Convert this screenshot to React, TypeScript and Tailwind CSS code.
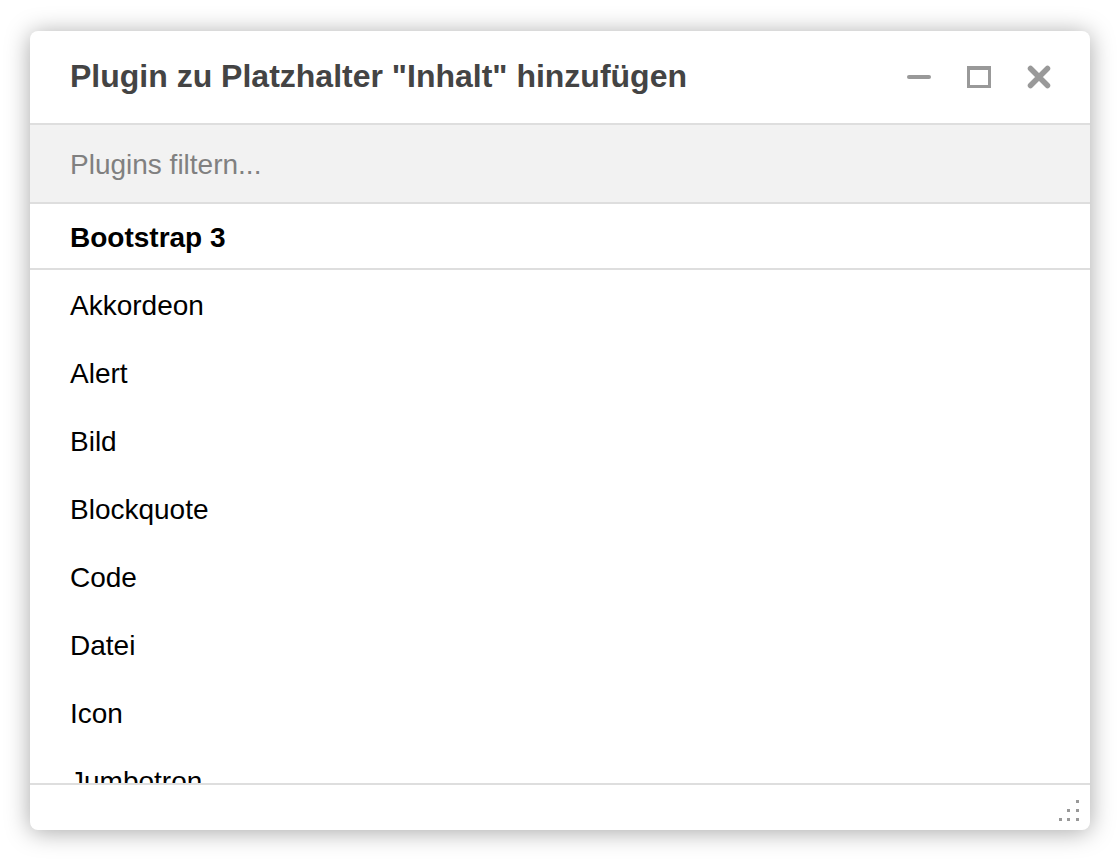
import React from 'react';

const plugins = ['Akkordeon', 'Alert', 'Bild', 'Blockquote', 'Code', 'Datei', 'Icon', 'Jumbotron'];

const MinimizeIcon = () => (
  <svg width="24" height="24" viewBox="0 0 24 24">
    <rect x="0" y="10" width="24" height="4" rx="2" fill="#999" />
  </svg>
);

const MaximizeIcon = () => (
  <svg width="24" height="24" viewBox="0 0 24 24">
    <rect x="1.5" y="2.5" width="21" height="19" fill="none" stroke="#999" strokeWidth="3" />
    <rect x="0" y="1" width="24" height="4" fill="#999" />
  </svg>
);

const CloseIcon = () => (
  <svg width="24" height="24" viewBox="0 0 24 24">
    <path d="M3.5 3.5 L20.5 20.5 M20.5 3.5 L3.5 20.5" stroke="#999" strokeWidth="5.5" strokeLinecap="round" />
  </svg>
);

const ResizeGrip = () => (
  <svg width="21" height="21" viewBox="0 0 21 21">
    <rect x="17" y="0" width="3" height="3" fill="#999" />
    <rect x="8" y="9" width="3" height="3" fill="#999" />
    <rect x="17" y="9" width="3" height="3" fill="#999" />
    <rect x="0" y="18" width="3" height="3" fill="#999" />
    <rect x="8" y="18" width="3" height="3" fill="#999" />
    <rect x="17" y="18" width="3" height="3" fill="#999" />
  </svg>
);

export default function App() {
  return (
    <div
      className="w-[1120px] h-[860px] bg-white pt-[31px] pl-[30px]"
      style={{ fontFamily: '"Liberation Sans", Arial, sans-serif' }}
    >
      <div className="w-[1060px] h-[799px] flex flex-col bg-white rounded-[8px] overflow-hidden shadow-[0_2px_24px_rgba(0,0,0,0.35)]">
        {/* header */}
        <div className="h-[94px] shrink-0 flex items-center justify-between pl-[40px] pr-[39px] border-b-2 border-[#dedede]">
          <h1 className="text-[32px] font-bold text-[#444] leading-none mb-[2px]">Plugin zu Platzhalter "Inhalt" hinzufügen</h1>
          <div className="flex items-center gap-[36px]">
            <MinimizeIcon />
            <MaximizeIcon />
            <CloseIcon />
          </div>
        </div>

        {/* filter */}
        <div className="h-[79px] shrink-0 flex items-center bg-[#f2f2f2] border-b-2 border-[#dedede] pl-[40px]">
          <input
            placeholder="Plugins filtern..."
            className="w-full bg-transparent outline-none text-[28px] text-black placeholder:text-[#808080] mt-[2px]"
          />
        </div>

        {/* list */}
        <div className="flex-1 overflow-hidden">
          <div className="h-[66px] flex items-center pl-[40px] pt-[4px] border-b-2 border-[#dedede] text-[28px] font-bold text-black">
            Bootstrap 3
          </div>
          {plugins.map((name) => (
            <div key={name} className="h-[68px] flex items-center pl-[40px] pt-[4px] text-[28px] text-black">
              {name}
            </div>
          ))}
        </div>

        {/* footer */}
        <div className="h-[47px] shrink-0 border-t-2 border-[#dedede] flex items-end justify-end pr-[10px] pb-[9px]">
          <ResizeGrip />
        </div>
      </div>
    </div>
  );
}
